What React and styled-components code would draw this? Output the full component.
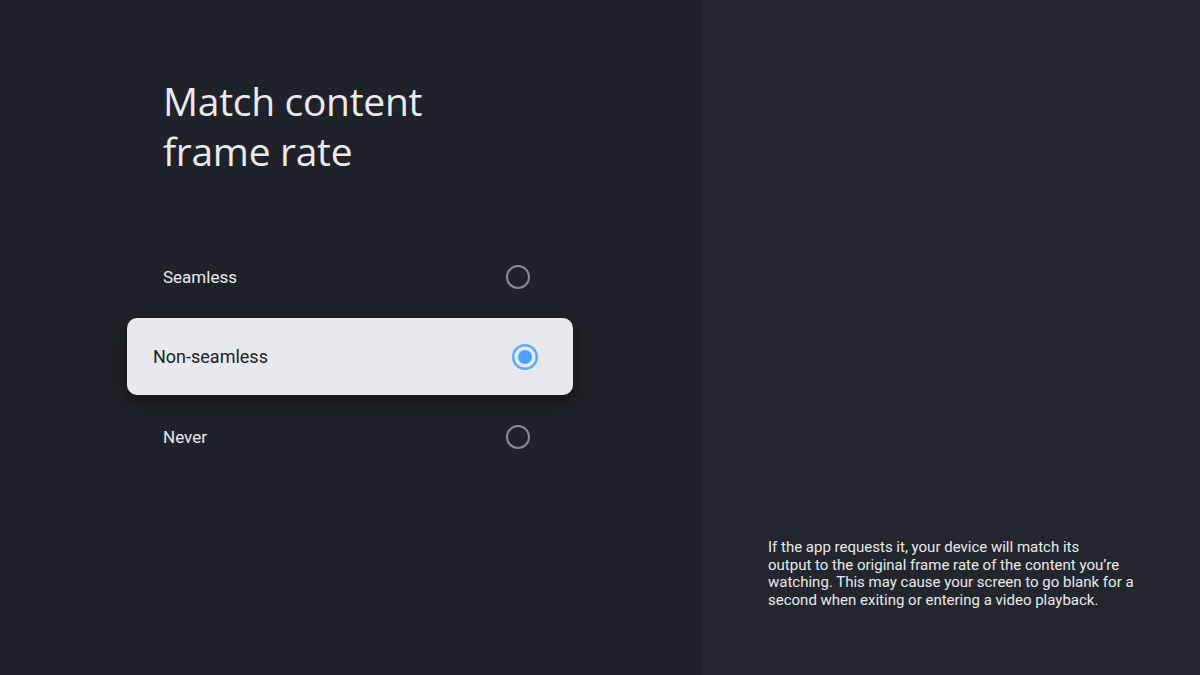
import * as React from 'react';
import styled, { createGlobalStyle } from 'styled-components';

const GlobalStyle = createGlobalStyle`
   html, body {
      margin: 0;
      padding: 0;
      background: #202229;
   }
   body {
      font-family: Roboto, 'Open Sans', sans-serif;
      -webkit-font-smoothing: antialiased;
   }
`;

const Screen = styled.div`
   display: flex;
   width: 1200px;
   height: 675px;
   overflow: hidden;
`;

const MainPanel = styled.section`
   display: flex;
   flex-direction: column;
   width: 702px;
   box-sizing: border-box;
   padding: 76px 0 0 137px;
   background: #202229;
`;

const Title = styled.h1`
   margin: 0 0 61px 26px;
   font-family: 'Open Sans', Roboto, sans-serif;
   font-weight: 400;
   font-size: 39px;
   line-height: 50px;
   letter-spacing: -0.3px;
   color: #e8eaed;
`;

const OptionList = styled.ul`
   display: flex;
   flex-direction: column;
   width: 426px;
   margin: 0;
   padding: 0;
   list-style: none;
`;

const Option = styled.li`
   display: flex;
   align-items: center;
   justify-content: space-between;
   height: ${(p) => (p.$selected ? '77px' : '80px')};
   margin: ${(p) => (p.$selected ? '1px -10px 2px' : '0')};
   padding: ${(p) => (p.$selected ? '0 34px 0 26px' : '0 32px 0 26px')};
   border-radius: 10px;
   background: ${(p) => (p.$selected ? '#e8e9ee' : 'transparent')};
   box-shadow: ${(p) => (p.$selected ? '0 6px 18px rgba(0, 0, 0, 0.45)' : 'none')};
   color: ${(p) => (p.$selected ? '#202124' : '#e8eaed')};
   font-size: ${(p) => (p.$selected ? '18px' : '17px')};
`;

const Radio = ({ checked }) =>
   checked ? (
      <svg width="28" height="28" viewBox="0 0 28 28">
         <circle cx="14" cy="14" r="11.8" fill="none" stroke="#5aabff" strokeWidth="2.4" />
         <circle cx="14" cy="14" r="7" fill="#4aa3ff" />
      </svg>
   ) : (
      <svg width="26" height="26" viewBox="0 0 26 26">
         <circle cx="13" cy="13" r="11" fill="none" stroke="#8a8c92" strokeWidth="2" />
      </svg>
   );

const SidePanel = styled.aside`
   display: flex;
   flex-direction: column;
   justify-content: flex-end;
   flex: 1;
   box-sizing: border-box;
   padding: 0 30px 66px 66px;
   background: #23262d;
`;

const Description = styled.p`
   margin: 0;
   font-size: 15px;
   line-height: 17.4px;
   color: #e8eaed;
   white-space: nowrap;
`;

const options = ['Seamless', 'Non-seamless', 'Never'];

const descriptionLines = [
   'If the app requests it, your device will match its',
   'output to the original frame rate of the content you’re',
   'watching. This may cause your screen to go blank for a',
   'second when exiting or entering a video playback.',
];

export default function App() {
   const selected = 'Non-seamless';
   return (
      <>
         <GlobalStyle />
         <Screen>
            <MainPanel>
               <Title>
                  Match content
                  <br />
                  frame rate
               </Title>
               <OptionList>
                  {options.map((label) => (
                     <Option key={label} $selected={label === selected}>
                        <span>{label}</span>
                        <Radio checked={label === selected} />
                     </Option>
                  ))}
               </OptionList>
            </MainPanel>
            <SidePanel>
               <Description>
                  {descriptionLines.map((line, i) => (
                     <React.Fragment key={i}>
                        {line}
                        {i < descriptionLines.length - 1 && <br />}
                     </React.Fragment>
                  ))}
               </Description>
            </SidePanel>
         </Screen>
      </>
   );
}
